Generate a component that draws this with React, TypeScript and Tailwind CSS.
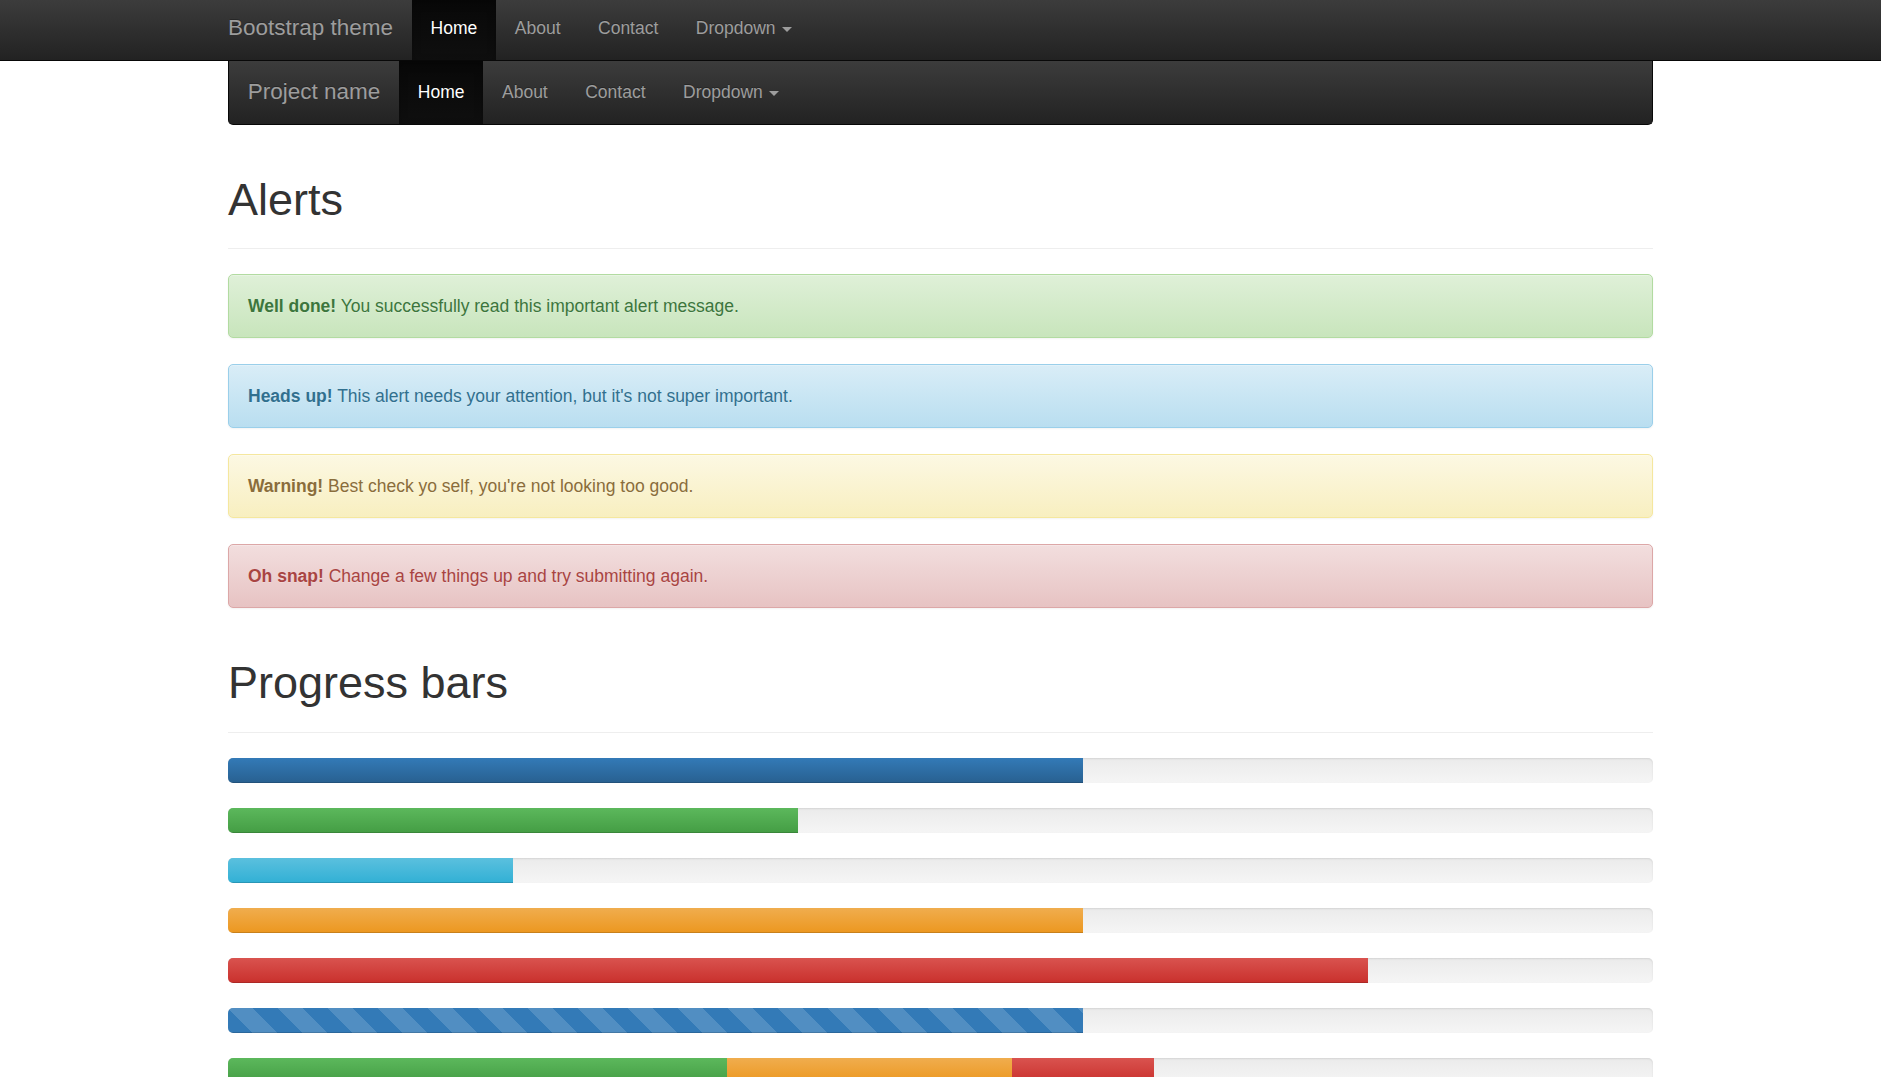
import React from "react";

const navBg = "bg-[linear-gradient(to_bottom,#3c3c3c_0%,#222_100%)]";

const NAV_ITEMS = ["Home", "About", "Contact", "Dropdown"];

function NavLinks({ padTop }: { padTop: string }) {
  return (
    <ul className="flex h-full">
      {NAV_ITEMS.map((item, i) => {
        const active = i === 0;
        return (
          <li key={item} className="h-full">
            <a
              href="#"
              className={`flex h-full items-start px-[18.75px] ${padTop} text-[17.5px] leading-[25px] [text-shadow:0_-1px_0_rgba(0,0,0,0.25)] ${
                active
                  ? "bg-[linear-gradient(to_bottom,#080808_0%,#0f0f0f_100%)] text-white shadow-[inset_0_3px_9px_rgba(0,0,0,0.25)]"
                  : "text-[#9d9d9d]"
              }`}
            >
              {item}
              {item === "Dropdown" && (
                <span className="ml-[6px] mt-[11px] inline-block h-0 w-0 border-x-[5px] border-t-[5px] border-x-transparent border-t-[#9d9d9d]" />
              )}
            </a>
          </li>
        );
      })}
    </ul>
  );
}

const ALERTS = [
  {
    strong: "Well done!",
    text: "You successfully read this important alert message.",
    cls: "bg-[linear-gradient(to_bottom,#dff0d8_0%,#c8e5bc_100%)] border-[#b2dba1] text-[#3c763d]",
  },
  {
    strong: "Heads up!",
    text: "This alert needs your attention, but it's not super important.",
    cls: "bg-[linear-gradient(to_bottom,#d9edf7_0%,#b9def0_100%)] border-[#9acfea] text-[#31708f]",
  },
  {
    strong: "Warning!",
    text: "Best check yo self, you're not looking too good.",
    cls: "bg-[linear-gradient(to_bottom,#fcf8e3_0%,#f8efc0_100%)] border-[#f5e79e] text-[#8a6d3b]",
  },
  {
    strong: "Oh snap!",
    text: "Change a few things up and try submitting again.",
    cls: "bg-[linear-gradient(to_bottom,#f2dede_0%,#e7c3c3_100%)] border-[#dca7a7] text-[#a94442]",
  },
];

const BAR_STYLES: Record<string, string> = {
  primary: "bg-[linear-gradient(to_bottom,#337ab7_0%,#286090_100%)]",
  success: "bg-[linear-gradient(to_bottom,#5cb85c_0%,#449d44_100%)]",
  info: "bg-[linear-gradient(to_bottom,#5bc0de_0%,#31b0d5_100%)]",
  warning: "bg-[linear-gradient(to_bottom,#f0ad4e_0%,#ec971f_100%)]",
  danger: "bg-[linear-gradient(to_bottom,#d9534f_0%,#c9302c_100%)]",
  striped:
    "bg-[#337ab7] bg-[linear-gradient(45deg,rgba(255,255,255,0.15)_25%,transparent_25%,transparent_50%,rgba(255,255,255,0.15)_50%,rgba(255,255,255,0.15)_75%,transparent_75%,transparent)] bg-[length:50px_50px]",
};

const PROGRESS: { kind: string; pct: number }[][] = [
  [{ kind: "primary", pct: 60 }],
  [{ kind: "success", pct: 40 }],
  [{ kind: "info", pct: 20 }],
  [{ kind: "warning", pct: 60 }],
  [{ kind: "danger", pct: 80 }],
  [{ kind: "striped", pct: 60 }],
  [
    { kind: "success", pct: 35 },
    { kind: "warning", pct: 20 },
    { kind: "danger", pct: 10 },
  ],
];

function PageHeader({ title, pb }: { title: string; pb: string }) {
  return (
    <div className={`mt-[50px] mb-[25px] border-b border-[#eee] ${pb}`}>
      <h1 className="mb-[12.5px] text-[45px] font-medium leading-[49.5px] text-[#333]">{title}</h1>
    </div>
  );
}

export default function App() {
  return (
    <div className="h-screen overflow-hidden bg-white font-['Liberation_Sans',Arial,sans-serif] text-[17.5px] leading-[25px] text-[#333]">
      {/* Fixed top navbar */}
      <div className={`h-[61px] border-b border-[#080808] ${navBg}`}>
        <div className="mx-auto flex h-full w-[1425px]">
          <a href="#" className="pr-[18.75px] pt-[15px] text-[22.5px] leading-[25px] text-[#9d9d9d] [text-shadow:0_-1px_0_rgba(0,0,0,0.25)]">
            Bootstrap theme
          </a>
          <NavLinks padTop="pt-[16px]" />
        </div>
      </div>

      {/* Inverse navbar example */}
      <div className={`mx-auto flex h-[64px] w-[1425px] rounded-b-[5px] border-x border-b border-[#080808] ${navBg}`}>
        <a href="#" className="px-[18.75px] pt-[18px] text-[22.5px] leading-[25px] text-[#9d9d9d] [text-shadow:0_-1px_0_rgba(0,0,0,0.25)]">
          Project name
        </a>
        <NavLinks padTop="pt-[19px]" />
      </div>

      <div className="mx-auto w-[1425px]">
        <PageHeader title="Alerts" pb="pb-[11px]" />
        {ALERTS.map((a) => (
          <div
            key={a.strong}
            className={`mb-[26px] rounded-[5px] border px-[19px] py-[18.5px] shadow-[inset_0_1px_0_rgba(255,255,255,0.25),0_1px_2px_rgba(0,0,0,0.05)] [text-shadow:0_1px_0_rgba(255,255,255,0.2)] ${a.cls}`}
          >
            <strong className="font-bold">{a.strong}</strong> {a.text}
          </div>
        ))}

        <PageHeader title="Progress bars" pb="pb-[11.5px]" />
        {PROGRESS.map((bars, i) => (
          <div
            key={i}
            className="mb-[25px] flex h-[25px] overflow-hidden rounded-[5px] bg-[linear-gradient(to_bottom,#ebebeb_0%,#f5f5f5_100%)] shadow-[inset_0_1px_2px_rgba(0,0,0,0.1)]"
          >
            {bars.map((b, j) => (
              <div
                key={j}
                className={`h-full shadow-[inset_0_-1px_0_rgba(0,0,0,0.15)] ${BAR_STYLES[b.kind]}`}
                style={{ width: `${b.pct}%` }}
              />
            ))}
          </div>
        ))}
      </div>
    </div>
  );
}
